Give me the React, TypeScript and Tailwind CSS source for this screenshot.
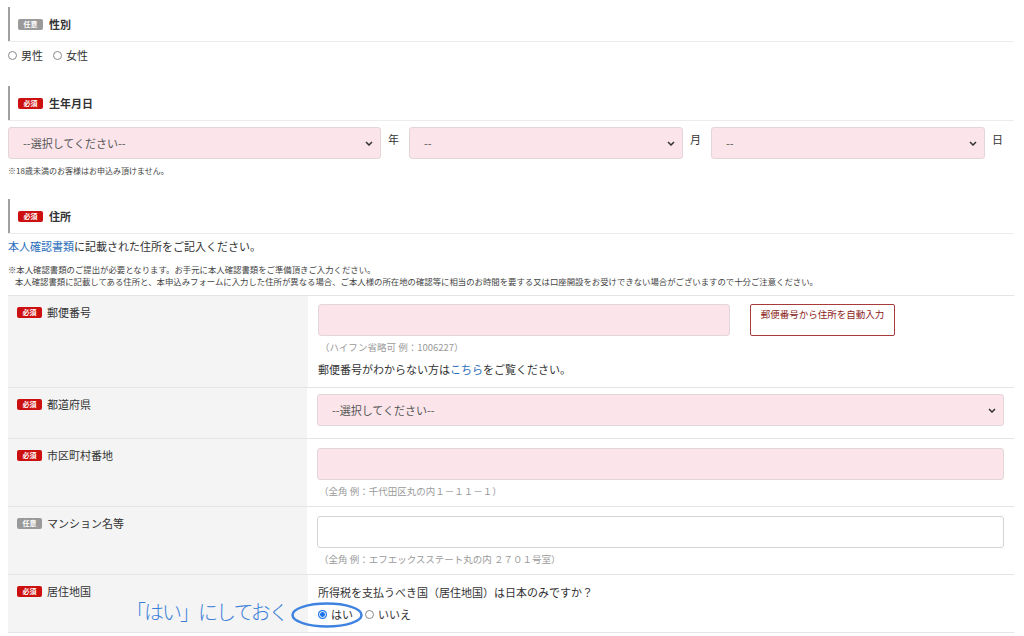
import React from 'react';

const jp = { fontFamily: '"Noto Sans CJK JP", "Noto Sans", sans-serif' };

const Badge: React.FC<{ required?: boolean }> = ({ required }) => (
  <span
    className={`inline-flex shrink-0 items-center justify-center w-[25px] h-[11px] rounded-[2px] text-[7px] leading-none text-white font-bold ${
      required ? 'bg-[#cc0f0f]' : 'bg-[#9a9a9a]'
    }`}
  >
    {required ? '必須' : '任意'}
  </span>
);

const SectionHead: React.FC<{ title: string; required?: boolean; className?: string }> = ({ title, required, className }) => (
  <div className={`border-b border-[#ececec] ${className ?? ''}`}>
    <div className="h-[34px] border-l-2 border-[#a0a0a0] pl-[8px] flex items-center gap-[6px]">
      <Badge required={required} />
      <span className="text-[11px] font-bold text-[#333]">{title}</span>
    </div>
  </div>
);

const Radio: React.FC<{ checked?: boolean }> = ({ checked }) =>
  checked ? (
    <span className="w-[9px] h-[9px] rounded-full bg-[#1a73e8] flex items-center justify-center">
      <span className="w-[5px] h-[5px] rounded-full bg-[#1a73e8] border border-white box-content" />
    </span>
  ) : (
    <span className="w-[9px] h-[9px] rounded-full border border-[#8a8a8a] bg-white" />
  );

const Chevron = () => (
  <svg width="8" height="5" viewBox="0 0 8 5" className="shrink-0">
    <path d="M1 1l3 3 3-3" fill="none" stroke="#333" strokeWidth="1.5" />
  </svg>
);

const FakeSelect: React.FC<{ text: string; className?: string }> = ({ text, className }) => (
  <div
    className={`h-[32px] bg-[#fbe5ea] border border-[#e3d6d9] rounded-[3px] flex items-center justify-between pl-[14px] pr-[7px] text-[11px] text-[#555] ${className ?? ''}`}
  >
    <span>{text}</span>
    <Chevron />
  </div>
);

const Row: React.FC<{ label: string; required?: boolean; className?: string; children: React.ReactNode }> = ({
  label,
  required,
  className,
  children,
}) => (
  <div className={`flex border-b border-[#e4e4e4] ${className ?? ''}`}>
    <div className="w-[300px] bg-[#f4f4f4] pl-[9px] pt-[10px]">
      <div className="h-[12px] flex items-center gap-[5px]">
        <Badge required={required} />
        <span className="text-[11px] leading-[12px] text-[#333]">{label}</span>
      </div>
    </div>
    <div className="flex-1 pl-[10px] pr-[10px]">{children}</div>
  </div>
);

const Hint: React.FC<{ children: React.ReactNode }> = ({ children }) => (
  <div className="mt-[4px] text-[9.5px] leading-[14px] text-[#9a9a9a] pl-[2px]">{children}</div>
);

export default function App() {
  return (
    <div className="w-[1024px] h-[636px] overflow-hidden bg-white pl-[8px] pr-[10px] text-[#333]" style={jp}>
      <SectionHead title="性別" className="pt-[7px]" />
      <div className="mt-[6px] h-[14px] flex items-center text-[11px]">
        <Radio />
        <span className="ml-[4px]">男性</span>
        <span className="ml-[10px] flex items-center">
          <Radio />
        </span>
        <span className="ml-[4px]">女性</span>
      </div>

      <SectionHead title="生年月日" required className="mt-[24px]" />
      <div className="mt-[6px] flex items-start">
        <FakeSelect text="--選択してください--" className="w-[373px]" />
        <span className="ml-[7px] mr-[10px] w-[11px] pt-[5px] text-[11px] leading-[14px]">年</span>
        <FakeSelect text="--" className="w-[274px]" />
        <span className="ml-[7px] mr-[10px] w-[11px] pt-[5px] text-[11px] leading-[14px]">月</span>
        <FakeSelect text="--" className="w-[274px]" />
        <span className="ml-[7px] w-[11px] pt-[5px] text-[11px] leading-[14px]">日</span>
      </div>
      <div className="mt-[6px] text-[8px] leading-[12px] text-[#444]">※18歳未満のお客様はお申込み頂けません。</div>

      <SectionHead title="住所" required className="mt-[22px]" />
      <div className="mt-[4px] text-[11px] leading-[16px]">
        <span className="text-[#2a6ebb]">本人確認書類</span>に記載された住所をご記入ください。
      </div>
      <div className="mt-[9px] text-[8.4px] leading-[12px] text-[#444]">
        <div>※本人確認書類のご提出が必要となります。お手元に本人確認書類をご準備頂きご入力ください。</div>
        <div className="pl-[7px]">
          本人確認書類に記載してある住所と、本申込みフォームに入力した住所が異なる場合、ご本人様の所在地の確認等に相当のお時間を要する又は口座開設をお受けできない場合がございますので十分ご注意ください。
        </div>
      </div>

      <div className="mt-[8px] border-t border-[#e4e4e4]">
        <Row label="郵便番号" required className="h-[92px]">
          <div className="pt-[8px] flex items-start">
            <div className="w-[412px] h-[32px] bg-[#fbe5ea] border border-[#e3d6d9] rounded-[3px]" />
            <div className="ml-[20px] w-[145px] h-[32px] border border-[#a83a3a] rounded-[2px] text-[9.5px] leading-[12px] text-[#8b1a1a] text-center pt-[3px]">
              郵便番号から住所を自動入力
            </div>
          </div>
          <Hint>（ハイフン省略可 例：1006227）</Hint>
          <div className="mt-[7px] text-[11px] leading-[16px]">
            郵便番号がわからない方は<span className="text-[#2a6ebb]">こちら</span>をご覧ください。
          </div>
        </Row>

        <Row label="都道府県" required className="h-[51px]">
          <div className="pt-[6px]">
            <FakeSelect text="--選択してください--" className="w-[687px]" />
          </div>
        </Row>

        <Row label="市区町村番地" required className="h-[68px]">
          <div className="pt-[9px]">
            <div className="w-[687px] h-[32px] bg-[#fbe5ea] border border-[#e3d6d9] rounded-[3px]" />
          </div>
          <Hint>（全角 例：千代田区丸の内１－１１－１）</Hint>
        </Row>

        <Row label="マンション名等" className="h-[68px]">
          <div className="pt-[9px]">
            <div className="w-[687px] h-[32px] bg-white border border-[#d4d4d4] rounded-[3px]" />
          </div>
          <Hint>（全角 例：エフエックスステート丸の内 ２７０１号室）</Hint>
        </Row>

        <div className="relative">
          <Row label="居住地国" required className="h-[58px]">
            <div className="pt-[9px] text-[11px] leading-[16px]">所得税を支払うべき国（居住地国）は日本のみですか？</div>
            <div className="mt-[6px] h-[16px] flex items-center text-[11px]">
              <Radio checked />
              <span className="ml-[4px]">はい</span>
              <span className="ml-[12px] flex items-center">
                <Radio />
              </span>
              <span className="ml-[4px]">いいえ</span>
            </div>
          </Row>
          <div className="absolute left-[118px] top-[25px] text-[20px] leading-[24px] font-light text-[#3b7fd8] tracking-[-2px]">
            「はい」にしておく
          </div>
          <svg className="absolute left-[282px] top-[26px]" width="74" height="28" viewBox="0 0 74 28">
            <ellipse cx="37" cy="14" rx="34.5" ry="11.5" fill="none" stroke="#3f83e0" strokeWidth="2.5" />
          </svg>
        </div>
      </div>
    </div>
  );
}
